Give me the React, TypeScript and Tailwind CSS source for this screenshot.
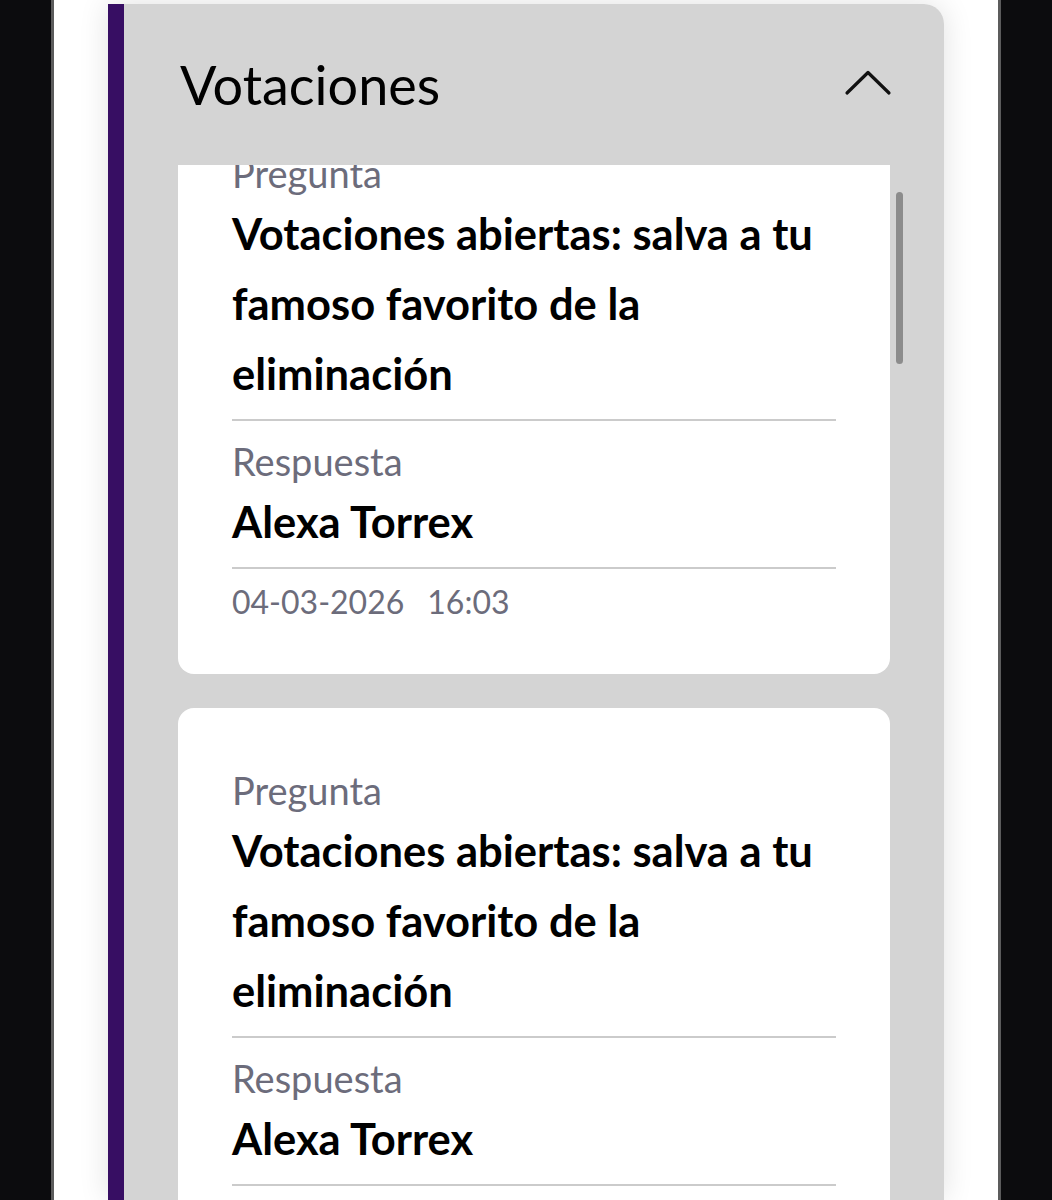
import React from 'react';

interface Vote {
    question: string;
    answer: string;
    date: string;
    time: string;
}

const votes: Vote[] = [
    {
        question: 'Votaciones abiertas: salva a tu famoso favorito de la eliminación',
        answer: 'Alexa Torrex',
        date: '04-03-2026',
        time: '16:03'
    },
    {
        question: 'Votaciones abiertas: salva a tu famoso favorito de la eliminación',
        answer: 'Alexa Torrex',
        date: '04-03-2026',
        time: '16:03'
    }
];

const VoteCard: React.FC<{ vote: Vote }> = ({ vote }) => (
    <div className="bg-white rounded-[16px] px-[54px] pt-[60px] pb-[52px]">
        <p className="text-[38px] leading-[44px] text-[#6c6c7b]">Pregunta</p>
        <p className="mt-[3px] text-[43.5px] leading-[70px] font-bold text-black">{vote.question}</p>
        <div className="mt-[11px] h-[2px] bg-[#cbcbcb]" />
        <p className="mt-[18px] text-[38px] leading-[44px] text-[#6c6c7b]">Respuesta</p>
        <p className="mt-[13px] text-[43.5px] leading-[50px] font-bold text-black">{vote.answer}</p>
        <div className="mt-[21px] h-[2px] bg-[#cbcbcb]" />
        <p className="mt-[13px] text-[32px] leading-[40px] text-[#6c6c7b]">
            {vote.date}<span className="inline-block w-[23px]" />{vote.time}
        </p>
    </div>
);

const App: React.FC = () => {
    return (
        <div className="h-[1200px] overflow-hidden bg-[#0c0c0e]" style={{ fontFamily: 'Lato, "Open Sans", sans-serif' }}>
            <div className="ml-[51px] w-[950px] h-full border-x-[3px] border-[#5c5c5c] bg-white pt-[4px] px-[54px]">
                <div className="h-[1196px] flex rounded-tr-[20px] overflow-hidden shadow-[0_0_30px_rgba(0,0,0,0.12)]">
                    {/* Purple accent */}
                    <div className="w-[16px] shrink-0 bg-[#370e63]" />

                    <div className="flex-1 flex flex-col bg-[#d4d4d4]">
                        {/* Header */}
                        <div className="h-[161px] shrink-0 flex items-center justify-between pl-[56px] pr-[52px]">
                            <h1 className="text-[54px] font-normal text-black">Votaciones</h1>
                            <svg width="48" height="28" viewBox="0 0 48 28" fill="none" className="-mt-[4px]">
                                <path d="M3 24 L24 3.5 L45 24" stroke="#111" strokeWidth="3.2" strokeLinecap="round" strokeLinejoin="round" />
                            </svg>
                        </div>

                        {/* List */}
                        <div className="relative flex-1 overflow-hidden">
                            <div className="-mt-[74px] px-[54px] flex flex-col gap-[34px]">
                                {votes.map((v, i) => (
                                    <VoteCard key={i} vote={v} />
                                ))}
                            </div>
                            <div className="absolute right-[41px] top-[27px] w-[7px] h-[172px] rounded-full bg-[#8c8c8c]" />
                        </div>
                    </div>
                </div>
            </div>
        </div>
    );
};

export default App;
